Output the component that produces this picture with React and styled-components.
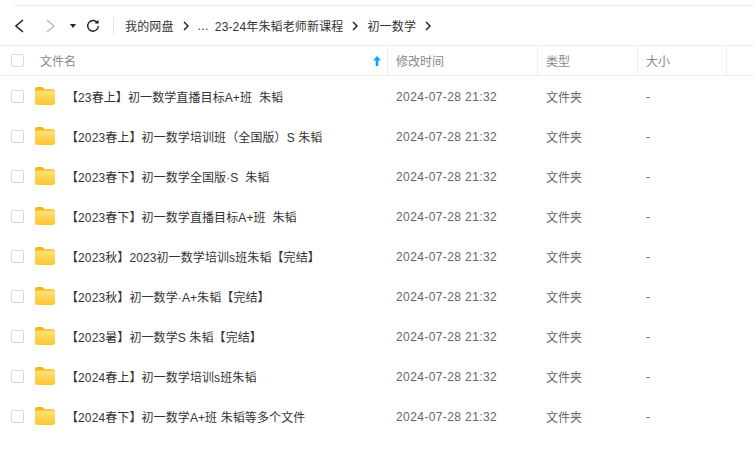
import React from 'react';
import styled, { createGlobalStyle } from 'styled-components';

const FONT = '"Liberation Sans", "Noto Sans CJK SC", sans-serif';

const files = [
	'【23春上】初一数学直播目标A+班\u00a0\u00a0朱韬',
	'【2023春上】初一数学培训班（全国版）S 朱韬',
	'【2023春下】初一数学全国版·S\u00a0\u00a0朱韬',
	'【2023春下】初一数学直播目标A+班\u00a0\u00a0朱韬',
	'【2023秋】2023初一数学培训s班朱韬【完结】',
	'【2023秋】初一数学·A+朱韬【完结】',
	'【2023暑】初一数学S 朱韬【完结】',
	'【2024春上】初一数学培训s班朱韬',
	'【2024春下】初一数学A+班 朱韬等多个文件',
];

const crumbs = ['我的网盘', '...', '23-24年朱韬老师新课程', '初一数学'];

const FolderIcon = () => (
	<svg width="20" height="18" viewBox="0 0 20 18">
		<defs>
			<linearGradient id="folderFront" x1="0" y1="0" x2="0" y2="1">
				<stop offset="0" stopColor="#ffe27a" />
				<stop offset="1" stopColor="#ffc52e" />
			</linearGradient>
		</defs>
		<path d="M0 2.5C0 1 1 0 2.5 0h4.2c.8 0 1.3.3 1.8.8L10 2.2h7.5C19 2.2 20 3.2 20 4.7V8H0z" fill="#fdb515" />
		<rect x="0" y="3.4" width="20" height="14.6" rx="2" fill="url(#folderFront)" />
	</svg>
);

const Chevron = ({ width = 9, height = 14, color = '#222', weight = 1.5, left }) => (
	<svg width={width} height={height} viewBox={`0 0 ${width} ${height}`} fill="none" stroke={color} strokeWidth={weight}>
		<path
			d={
				left
					? `M${width - 1} 1 1 ${height / 2}l${width - 2} ${height / 2 - 1}`
					: `M1 1l${width - 2} ${height / 2 - 1}L1 ${height - 1}`
			}
		/>
	</svg>
);

const App = () => (
	<Page>
		<GlobalStyle />
		<TopRule />
		<Toolbar>
			<NavButton>
				<Chevron left />
			</NavButton>
			<NavButton>
				<Chevron color="#b5b5b5" weight={1.2} />
			</NavButton>
			<Caret />
			<Refresh viewBox="0 0 14 14" fill="none" stroke="#222" strokeWidth="1.4">
				<path d="M11.6 4.2A5.3 5.3 0 1 0 12.3 7" />
				<path d="M8.6 4.6h4V.8z" fill="#222" stroke="none" />
			</Refresh>
			<Separator />
			<Breadcrumbs>
				{crumbs.map(crumb =>
					crumb === '...' ? (
						<Ellipsis key={crumb}>{crumb}</Ellipsis>
					) : (
						<Crumb key={crumb}>
							{crumb}
							<CrumbArrow>
								<Chevron width={6} height={10} color="#222" weight={1.5} />
							</CrumbArrow>
						</Crumb>
					),
				)}
			</Breadcrumbs>
		</Toolbar>
		<HeaderRow>
			<NameCell>
				<Checkbox />
				<HeaderLabel>文件名</HeaderLabel>
				<SortArrow viewBox="0 0 8 10">
					<path d="M4 0 8 4.6H5.3V10H2.7V4.6H0z" fill="#06a7ff" />
				</SortArrow>
			</NameCell>
			<HeaderCell width={150}>修改时间</HeaderCell>
			<HeaderCell width={100}>类型</HeaderCell>
			<HeaderCell width={90} last>
				大小
			</HeaderCell>
		</HeaderRow>
		{files.map(name => (
			<Row key={name}>
				<NameCell>
					<Checkbox />
					<FolderSlot>
						<FolderIcon />
					</FolderSlot>
					<FileName>{name}</FileName>
				</NameCell>
				<Cell width={150}>
					<DateText>2024-07-28 21:32</DateText>
				</Cell>
				<Cell width={100}>文件夹</Cell>
				<Cell width={90}>
					<DateText>-</DateText>
				</Cell>
			</Row>
		))}
	</Page>
);

const GlobalStyle = createGlobalStyle`
	html, body {
		margin: 0;
		background: #fff;
	}
	body {
		font-family: ${FONT};
		font-size: 12px;
	}
`;

const Page = styled.div`
	width: 754px;
	height: 468px;
	overflow: hidden;
	padding-top: 5px;
	box-sizing: border-box;
`;

const TopRule = styled.div`
	height: 1px;
	margin-left: 14px;
	background: #eeeeee;
`;

const Toolbar = styled.div`
	display: flex;
	align-items: center;
	height: 39px;
	padding-left: 15px;
	border-bottom: 1px solid #eeeeee;
`;

const NavButton = styled.div`
	display: flex;
	width: 31px;
	&:nth-child(2) {
		width: 24px;
	}
`;

const Caret = styled.div`
	width: 0;
	height: 0;
	margin-top: 1px;
	border-left: 3px solid transparent;
	border-right: 3px solid transparent;
	border-top: 4px solid #222;
`;

const Refresh = styled.svg`
	width: 14px;
	height: 14px;
	margin-left: 10px;
`;

const Separator = styled.div`
	width: 1px;
	height: 16px;
	margin: 0 11px 0 13px;
	background: #e2e2e2;
`;

const Breadcrumbs = styled.div`
	display: flex;
	align-items: center;
	color: #333;
	letter-spacing: 0.15px;
`;

const Crumb = styled.div`
	display: flex;
	align-items: center;
`;

const Ellipsis = styled.span`
	margin-right: 6px;
	letter-spacing: 0.4px;
`;

const CrumbArrow = styled.span`
	display: flex;
	margin: 0 9px;
`;

const HeaderRow = styled.div`
	display: flex;
	box-sizing: border-box;
	height: 30px;
	padding-right: 27px;
	border-bottom: 1px solid #f0f0f0;
	color: #888;
`;

const NameCell = styled.div`
	display: flex;
	align-items: center;
	flex: 1;
	min-width: 0;
	padding-left: 11px;
`;

const Checkbox = styled.div`
	flex: none;
	width: 11px;
	height: 11px;
	border: 1px solid #d9d9d9;
	border-radius: 2px;
`;

const HeaderLabel = styled.span`
	margin-left: 16px;
	flex: 1;
`;

const SortArrow = styled.svg`
	width: 8px;
	height: 10px;
	margin-right: 6px;
`;

const HeaderCell = styled.div`
	display: flex;
	align-items: center;
	box-sizing: border-box;
	width: ${props => props.width}px;
	padding-left: 8px;
	border-left: 1px solid #eeeeee;
	border-right: ${props => (props.last ? '1px solid #eeeeee' : 'none')};
`;

const Row = styled.div`
	display: flex;
	box-sizing: border-box;
	height: 40px;
	padding-right: 27px;
	color: #666;
`;

const FolderSlot = styled.div`
	display: flex;
	margin-left: 11px;
`;

const FileName = styled.span`
	margin-left: 11px;
	color: #333;
	letter-spacing: 0.1px;
	white-space: nowrap;
`;

const Cell = styled.div`
	display: flex;
	align-items: center;
	box-sizing: border-box;
	width: ${props => props.width}px;
	padding-left: 9px;
`;

const DateText = styled.span`
	position: relative;
	top: 1px;
	letter-spacing: 0.4px;
`;

export default App;
